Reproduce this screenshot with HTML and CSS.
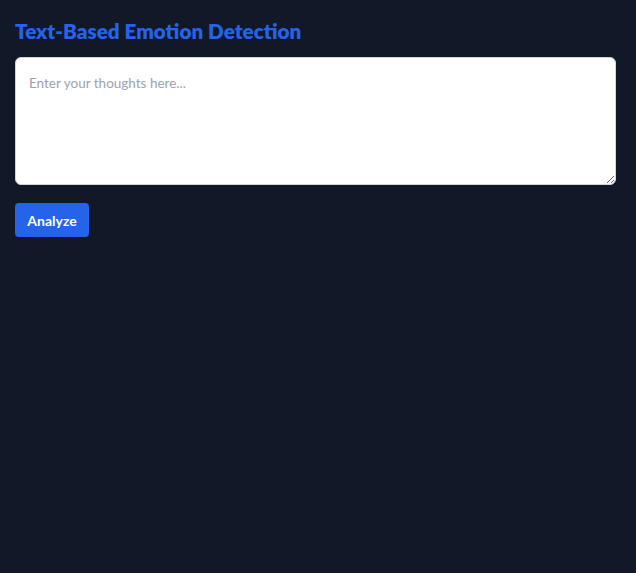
FILE: index.html
```html
<!DOCTYPE html>
<html lang="en">
<head>
<meta charset="utf-8">
<title>Text-Based Emotion Detection</title>
<link rel="stylesheet" href="styles.css">
</head>
<body>
<main class="app">
  <h1 class="title">Text-Based Emotion Detection</h1>
  <textarea class="input" placeholder="Enter your thoughts here..."></textarea>
  <div class="actions">
    <button class="btn" type="button">Analyze</button>
  </div>
</main>
</body>
</html>
```

FILE: styles.css
```css
html, body {
  margin: 0;
  padding: 0;
  background: #111827;
  height: 100%;
}
body {
  font-family: Lato, "Noto Sans", sans-serif;
  color: #fff;
}
.app {
  padding: 15px;
  display: flex;
  flex-direction: column;
}
.title {
  margin: 0 0 12px 0;
  padding-top: 2px;
  font-size: 20.7px;
  line-height: 28px;
  font-weight: 800;
  color: #2563eb;
}
.input {
  display: block;
  box-sizing: border-box;
  width: 601px;
  height: 128px;
  margin: 0;
  padding: 13px 13px;
  border: 1px solid #d1d5db;
  border-radius: 6px;
  background: #fff;
  font-family: Lato, "Noto Sans", sans-serif;
  font-size: 13.5px;
  line-height: 24px;
  color: #111827;
  outline: none;
}
.input::placeholder {
  color: #9ca3af;
}
.actions {
  margin-top: 18px;
}
.btn {
  box-sizing: border-box;
  width: 74px;
  height: 34px;
  padding: 0;
  border: none;
  border-radius: 4px;
  background: #2563eb;
  color: #fff;
  font-family: Lato, "Noto Sans", sans-serif;
  font-size: 14px;
  font-weight: 700;
  cursor: pointer;
}
```
